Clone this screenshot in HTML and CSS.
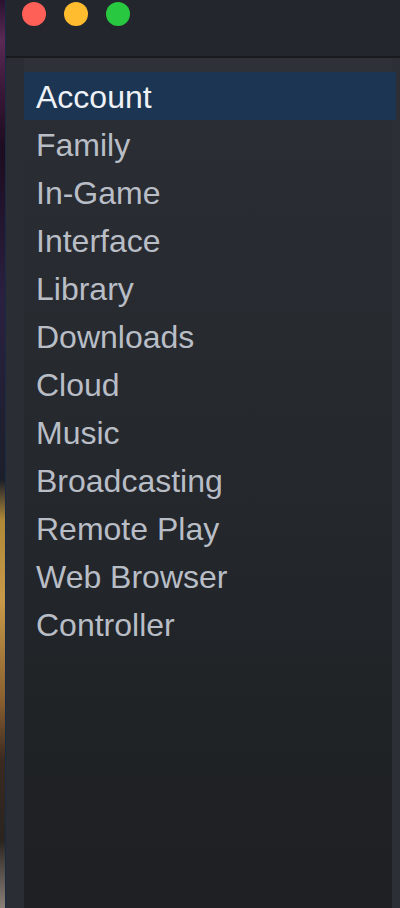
FILE: index.html
```html
<!DOCTYPE html>
<html lang="en">
<head>
<meta charset="utf-8">
<title>Steam Settings</title>
<link rel="stylesheet" href="styles.css">
</head>
<body>
<div class="desktop">
  <div class="wallpaper"></div>
  <div class="window">
    <div class="titlebar">
      <span class="light red"></span>
      <span class="light yellow"></span>
      <span class="light green"></span>
    </div>
    <div class="divider"></div>
    <div class="content">
      <div class="gutter"></div>
      <div class="panel">
        <div class="panel-top"></div>
        <ul class="nav">
          <li class="item selected">Account</li>
          <li class="item">Family</li>
          <li class="item">In-Game</li>
          <li class="item">Interface</li>
          <li class="item">Library</li>
          <li class="item">Downloads</li>
          <li class="item">Cloud</li>
          <li class="item">Music</li>
          <li class="item">Broadcasting</li>
          <li class="item">Remote Play</li>
          <li class="item">Web Browser</li>
          <li class="item">Controller</li>
        </ul>
      </div>
      <div class="track"></div>
    </div>
  </div>
</div>
</body>
</html>
```
FILE: styles.css
```css
html, body {
  margin: 0;
  padding: 0;
  width: 400px;
  height: 908px;
  overflow: hidden;
  background: #23262d;
  font-family: "Liberation Sans", Arial, Helvetica, sans-serif;
}
.desktop {
  display: flex;
  width: 400px;
  height: 908px;
}
.wallpaper {
  width: 5px;
  flex: none;
  background: linear-gradient(to bottom,
    #2a1230 0px, #5a2a55 40px, #3a1838 90px, #1c0c20 150px,
    #2a2040 300px, #1b1f2a 480px, #b08838 520px, #c89a48 600px,
    #8a6030 700px, #3a2a20 760px, #2a2420 840px, #8a8078 908px);
}
.window {
  flex: 1;
  display: flex;
  flex-direction: column;
  background: #262930;
  border-left: 1px solid #1a2a40;
}
.titlebar {
  height: 56px;
  flex: none;
  display: flex;
  align-items: flex-start;
  gap: 18px;
  padding: 2px 0 0 16px;
  box-sizing: border-box;
  background: #23262d;
}
.light {
  width: 24px;
  height: 24px;
  border-radius: 50%;
}
.red { background: #fe5f57; }
.yellow { background: #febc2e; }
.green { background: #28c840; }
.divider {
  height: 2px;
  flex: none;
  background: #17191c;
}
.content {
  flex: 1;
  display: flex;
}
.gutter {
  width: 18px;
  flex: none;
  background: #2a2d33;
}
.panel {
  flex: 1;
  display: flex;
  flex-direction: column;
  background: linear-gradient(to bottom, #2b2e34 0px, #25282d 400px, #1f2225 700px, #1e2024 850px);
}
.panel-top {
  height: 14px;
  flex: none;
  background: #2e3137;
}
.nav {
  list-style: none;
  margin: 0;
  padding: 0;
}
.item {
  height: 48px;
  line-height: 50px;
  padding-left: 12px;
  font-size: 32px;
  color: #b8bdc6;
  margin-right: -4px;
  position: relative;
  white-space: nowrap;
}
.item.selected {
  background: #1b3553;
  color: #eef1f5;
}
.track {
  width: 8px;
  flex: none;
  background: #2c2f35;
}
```
